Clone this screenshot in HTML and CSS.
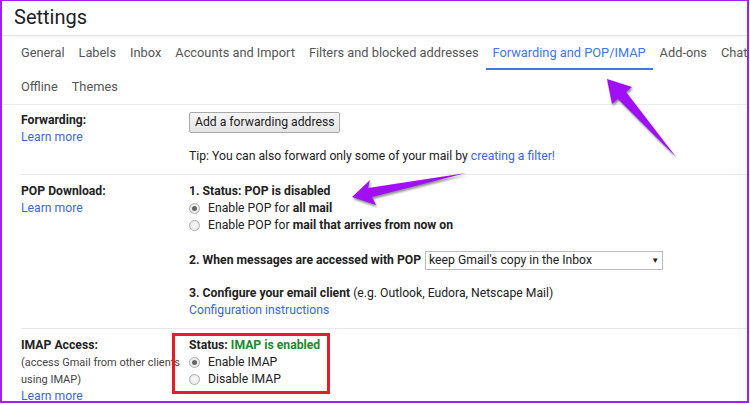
FILE: index.html
```html
<!DOCTYPE html>
<html lang="en">
<head>
    <meta charset="UTF-8">
    <title>Settings</title>
    <link rel="stylesheet" href="styles.css">
</head>
<body>
<div class="frame">
    <div class="header">Settings</div>

    <div class="tabs">
        <div class="tab-row">
            <span class="tab">General</span>
            <span class="tab">Labels</span>
            <span class="tab">Inbox</span>
            <span class="tab">Accounts and Import</span>
            <span class="tab">Filters and blocked addresses</span>
            <span class="tab active">Forwarding and POP/IMAP</span>
            <span class="tab">Add-ons</span>
            <span class="tab">Chat</span>
        </div>
        <div class="tab-row">
            <span class="tab">Offline</span>
            <span class="tab">Themes</span>
        </div>
    </div>

    <div class="section forwarding">
        <div class="label">
            <div class="title">Forwarding:</div>
            <a class="link">Learn more</a>
        </div>
        <div class="value">
            <button class="btn">Add a forwarding address</button>
            <div class="tip">Tip: You can also forward only some of your mail by <a class="link">creating a filter!</a></div>
        </div>
    </div>

    <div class="section pop">
        <div class="label">
            <div class="title">POP Download:</div>
            <a class="link">Learn more</a>
        </div>
        <div class="value">
            <div class="line"><b>1. Status: POP is disabled</b></div>
            <div class="line"><span class="radio checked"></span>Enable POP for <b>all mail</b></div>
            <div class="line"><span class="radio"></span>Enable POP for <b>mail that arrives from now on</b></div>
            <div class="line step2"><b>2. When messages are accessed with POP</b>
                <span class="select">keep Gmail's copy in the Inbox<span class="caret">&#9660;</span></span>
            </div>
            <div class="line step3"><b>3. Configure your email client</b> (e.g. Outlook, Eudora, Netscape Mail)</div>
            <div class="line"><a class="link">Configuration instructions</a></div>
        </div>
    </div>

    <div class="section imap">
        <div class="label">
            <div class="title">IMAP Access:</div>
            <div class="note">(access Gmail from other clients</div>
            <div class="note">using IMAP)</div>
            <a class="link">Learn more</a>
        </div>
        <div class="value">
            <div class="line"><b>Status: <span class="on">IMAP is enabled</span></b></div>
            <div class="line"><span class="radio checked"></span>Enable IMAP</div>
            <div class="line"><span class="radio"></span>Disable IMAP</div>
        </div>
    </div>

    <!-- annotations drawn over the screenshot -->
    <div class="highlight"></div>
    <svg class="arrows" width="750" height="404" viewBox="0 0 750 404">
        <polygon points="607,79 632,87 626,92 676,157 618,99 612,104"/>
        <polygon points="352,197 370,180 368,188 466,173 372,197 376,205"/>
    </svg>
</div>
</body>
</html>
```

FILE: styles.css
```css
body {
    margin: 0;
    font-family: Roboto, "Liberation Sans", Arial, sans-serif;
    font-size: 12.2px;
    color: #222;
}
.frame {
    position: relative;
    width: 749px;
    height: 403px;
    box-sizing: border-box;
    border: 2px solid #a020f0;
    border-top-width: 1px;
    overflow: hidden;
    background: #fff;
}
.header {
    height: 34px;
    padding-left: 12px;
    font-size: 20px;
    line-height: 33px;
    color: #202124;
    border-bottom: 1px solid #e4e4e4;
    box-shadow: 0 1px 2px rgba(0, 0, 0, 0.06);
}
.tabs {
    padding-left: 12px;
    border-bottom: 1px solid #ececec;
}
.tab-row {
    display: flex;
    white-space: nowrap;
    height: 34px;
}
.tab {
    padding: 4px 7px 0;
    font-size: 12.8px;
    line-height: 26px;
    color: #555;
    border-bottom: 2px solid transparent;
}
.tab.active {
    color: #3a78e8;
    border-bottom-color: #3a78e8;
}
.section {
    display: flex;
    margin-left: 19px;
    line-height: 17px;
    border-bottom: 1px solid #e8e8e8;
}
.section:last-of-type {
    border-bottom: none;
}
.label {
    width: 168px;
    flex: none;
}
.title {
    font-weight: bold;
}
.note {
    font-size: 11px;
    color: #444;
}
.link {
    display: block;
    color: #3b67d9;
}
.tip .link {
    display: inline;
}
.forwarding {
    padding: 7px 0 9px;
}
.btn {
    display: block;
    height: 21px;
    padding: 0 5px;
    font: inherit;
    color: #222;
    background: linear-gradient(#f6f6f6, #e4e4e4);
    border: 1px solid #a8a8a8;
    border-radius: 2px;
}
.tip {
    margin-top: 15px;
}
.pop {
    padding: 8px 0 9px;
}
.line {
    display: flex;
    align-items: center;
    white-space: pre;
}
.radio {
    width: 9px;
    height: 9px;
    margin-right: 8px;
    border: 1px solid #b0b0b0;
    border-radius: 50%;
    background: radial-gradient(#fafafa, #e4e4e4);
    position: relative;
}
.radio.checked::after {
    content: "";
    position: absolute;
    left: 2px;
    top: 2px;
    width: 5px;
    height: 5px;
    border-radius: 50%;
    background: #666;
}
.step2 {
    margin-top: 17px;
}
.select {
    display: inline-flex;
    justify-content: space-between;
    width: 230px;
    height: 17px;
    margin-left: 4px;
    padding: 0 3px;
    line-height: 17px;
    border: 1px solid #bdbdbd;
}
.caret {
    font-size: 8px;
}
.step3 {
    margin-top: 15px;
}
.imap {
    padding-top: 8px;
}
.on {
    color: #1c8a2c;
}
.highlight {
    position: absolute;
    left: 170px;
    top: 332px;
    width: 152px;
    height: 55px;
    border: 3px solid #e41e26;
}
.arrows {
    position: absolute;
    left: -2px;
    top: -1px;
    fill: #a00ff5;
    filter: drop-shadow(1px 2px 1px rgba(0, 0, 0, 0.45));
}
```
